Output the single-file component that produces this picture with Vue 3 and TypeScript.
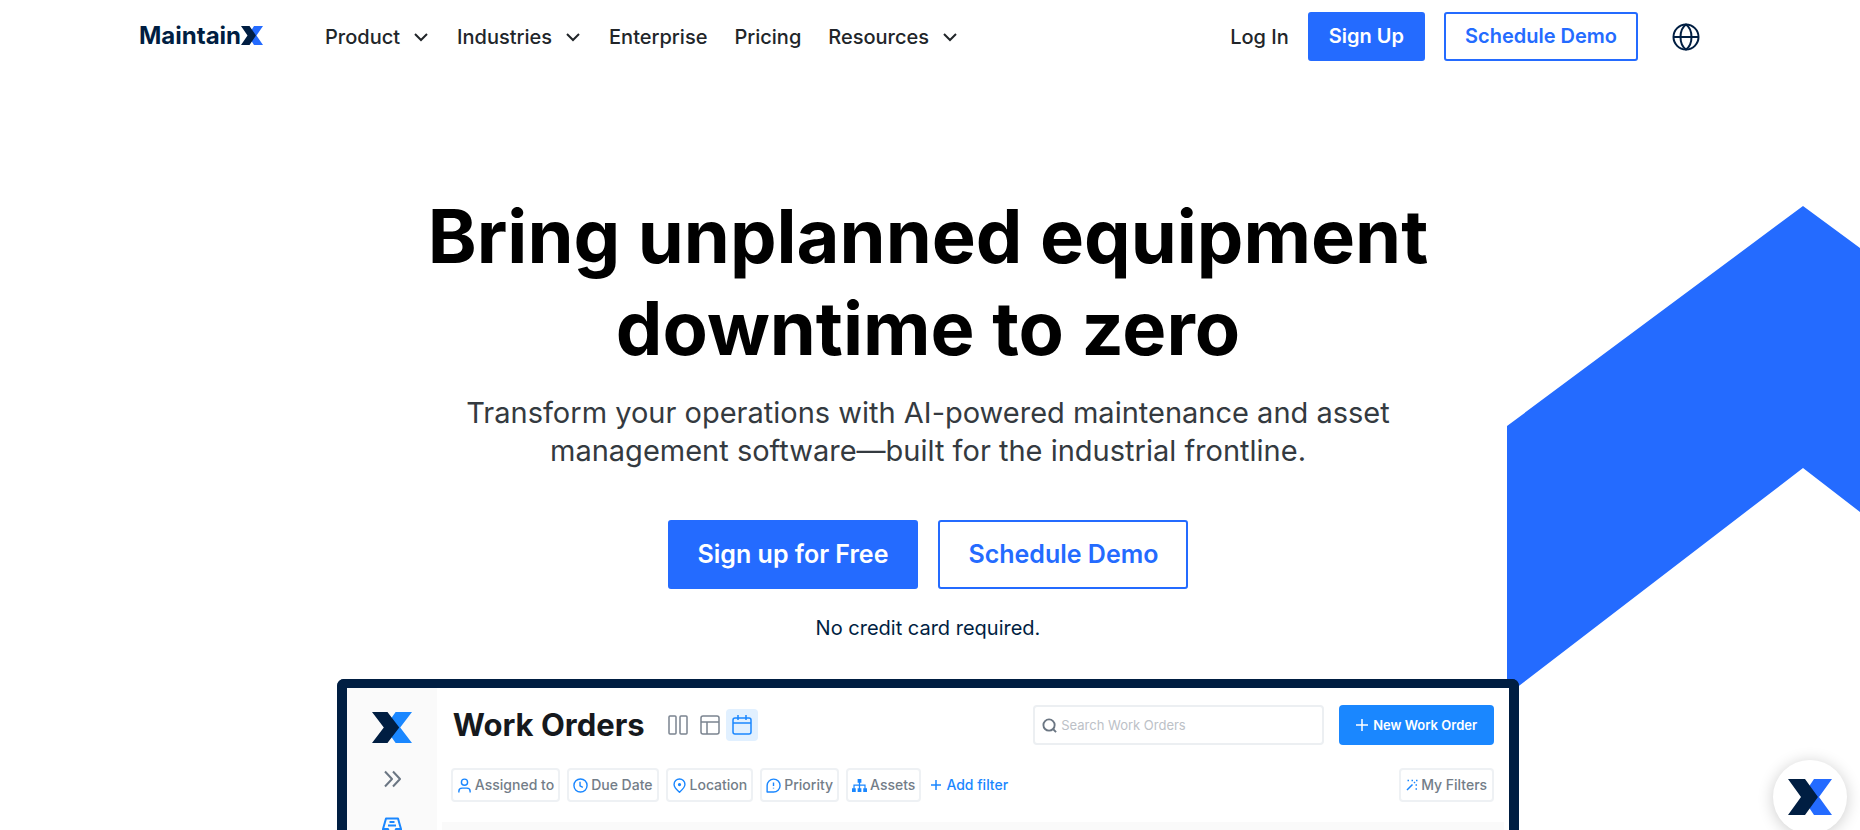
<script setup lang="ts">
import { ref } from 'vue'

interface NavItem {
  label: string
  menu: boolean
}

interface Filter {
  label: string
  icon: 'user' | 'clock' | 'pin' | 'alert' | 'tree'
}

const navItems: NavItem[] = [
  { label: 'Product', menu: true },
  { label: 'Industries', menu: true },
  { label: 'Enterprise', menu: false },
  { label: 'Pricing', menu: false },
  { label: 'Resources', menu: true },
]

const filters: Filter[] = [
  { label: 'Assigned to', icon: 'user' },
  { label: 'Due Date', icon: 'clock' },
  { label: 'Location', icon: 'pin' },
  { label: 'Priority', icon: 'alert' },
  { label: 'Assets', icon: 'tree' },
]

const query = ref('')
const view = ref<'columns' | 'table' | 'calendar'>('calendar')
</script>

<template>
  <div class="page">
    <svg class="backdrop" viewBox="0 0 353 489" aria-hidden="true">
      <path d="M0 220 296 0 353 42V306L296 262 0 489Z" fill="#246bff" />
    </svg>

    <header class="header">
      <a class="brand" href="#" aria-label="MaintainX home">
        <span>Maintain</span>
        <svg class="brand-mark" viewBox="0 0 44 36" preserveAspectRatio="none" aria-hidden="true">
          <path d="M26 0H44L31 18 44 36H26L20 27 29 18 20 9Z" fill="#246bff" />
          <path d="M0 0H17L30 18 17 36H0L13 18Z" fill="#001e42" />
        </svg>
      </a>
      <nav class="nav" aria-label="Main">
        <template v-for="item in navItems" :key="item.label">
          <button v-if="item.menu" class="nav-item" type="button" aria-haspopup="true">
            {{ item.label }}
            <svg class="caret" viewBox="0 0 14 10" aria-hidden="true"><path d="M1 2 7 8 13 2" /></svg>
          </button>
          <a v-else class="nav-item" href="#">{{ item.label }}</a>
        </template>
      </nav>
      <div class="account">
        <a class="nav-item" href="#">Log In</a>
        <a class="btn solid" href="#">Sign Up</a>
        <a class="btn outline" href="#">Schedule Demo</a>
        <button class="globe" type="button" aria-label="Change language">
          <svg viewBox="0 0 28 28" aria-hidden="true">
            <circle cx="14" cy="14" r="12.5" />
            <path d="M1.500 14H26.500M14 1.500C10.500 4 8.500 9 8.500 14S10.500 24 14 26.500C17.500 24 19.500 19 19.500 14S17.500 4 14 1.500Z" />
          </svg>
        </button>
      </div>
    </header>

    <main class="hero">
      <h1>Bring unplanned equipment<br />downtime to zero</h1>
      <p class="lead">
        Transform your operations with AI-powered maintenance and asset<br />
        management software—built for the industrial frontline.
      </p>
      <div class="actions">
        <a class="btn large solid" href="#">Sign up for Free</a>
        <a class="btn large outline" href="#">Schedule Demo</a>
      </div>
      <p class="note">No credit card required.</p>

      <section class="app" aria-label="Work Orders preview">
        <aside class="rail">
          <svg class="rail-mark" viewBox="0 0 44 36" preserveAspectRatio="none" aria-hidden="true">
            <path d="M26 0H44L31 18 44 36H26L20 27 29 18 20 9Z" fill="#1a87ff" />
            <path d="M0 0H17L30 18 17 36H0L13 18Z" fill="#001e42" />
          </svg>
          <button class="rail-btn" type="button" aria-label="Expand sidebar">
            <svg class="line gray" viewBox="0 0 20 20" aria-hidden="true"><path d="M3 2.500 10 10 3 17.500M11 2.500 18 10 11 17.500" /></svg>
          </button>
          <button class="rail-btn orders" type="button" aria-label="Work orders">
            <svg class="line blue" viewBox="0 0 20 20" aria-hidden="true">
              <path d="M4 1.500H16L19 12V19H1V12ZM7.500 5H12.500M6 8.500H14M1 12H6L7 15H13L14 12H19" />
            </svg>
          </button>
        </aside>
        <div class="workspace">
          <div class="bar">
            <h2>Work Orders</h2>
            <div class="views" role="group" aria-label="View">
              <button type="button" aria-label="Columns" :class="{ active: view === 'columns' }" @click="view = 'columns'">
                <svg class="line" viewBox="0 0 20 20" aria-hidden="true"><rect x="1" y="1" width="7" height="18" rx="1" /><rect x="12" y="1" width="7" height="18" rx="1" /></svg>
              </button>
              <button type="button" aria-label="Table" :class="{ active: view === 'table' }" @click="view = 'table'">
                <svg class="line" viewBox="0 0 20 20" aria-hidden="true"><rect x="1" y="1" width="18" height="18" rx="2" /><path d="M1 7H19M7 7V19" /></svg>
              </button>
              <button type="button" aria-label="Calendar" :class="{ active: view === 'calendar' }" @click="view = 'calendar'">
                <svg class="line" viewBox="0 0 20 20" aria-hidden="true"><rect x="1" y="3" width="18" height="16" rx="2" /><path d="M1 8H19M6 0V5M14 0V5" /></svg>
              </button>
            </div>
            <label class="search">
              <svg class="line gray" viewBox="0 0 16 16" aria-hidden="true"><circle cx="7.500" cy="7.500" r="6" /><path d="M12 12 15 15" /></svg>
              <input v-model="query" type="search" placeholder="Search Work Orders" aria-label="Search Work Orders" />
            </label>
            <button class="new-order" type="button">
              <svg class="line" viewBox="0 0 12 12" aria-hidden="true"><path d="M6 0V12M0 6H12" /></svg>
              New Work Order
            </button>
          </div>
          <div class="filters">
            <button v-for="filter in filters" :key="filter.label" class="chip" type="button">
              <svg v-if="filter.icon === 'user'" class="line blue" viewBox="0 0 16 16" aria-hidden="true"><circle cx="8" cy="4.500" r="3.300" /><path d="M2 15.500V14C2 12 3.500 10.800 5.500 10.800H10.500C12.500 10.800 14 12 14 14V15.500" /></svg>
              <svg v-else-if="filter.icon === 'clock'" class="line blue" viewBox="0 0 16 16" aria-hidden="true"><circle cx="8" cy="8" r="7" /><path d="M7.500 4V8.500L10.500 10" /></svg>
              <svg v-else-if="filter.icon === 'pin'" class="line blue" viewBox="0 0 16 16" aria-hidden="true"><path d="M8 15.200C5 12.500 2.200 10 2.200 6.800A5.800 5.800 0 0 1 13.800 6.800C13.800 10 11 12.500 8 15.200Z" /><circle cx="8" cy="7" r="1" fill="currentColor" /></svg>
              <svg v-else-if="filter.icon === 'alert'" class="line blue" viewBox="0 0 16 16" aria-hidden="true"><path d="M1.200 15V8A6.900 6.900 0 1 1 8 15ZM8 4.800V8.500M8 10.300V11.300" /></svg>
              <svg v-else class="blue" viewBox="0 0 16 16" aria-hidden="true"><path d="M6 1H10V5H8.700V7H14.500V11H16V15H12V11H13.200V8.300H8.700V11H10V15H6V11H7.300V8.300H2.800V11H4V15H0V11H1.500V7H7.300V5H6Z" fill="currentColor" /></svg>
              {{ filter.label }}
            </button>
            <button class="add" type="button">
              <svg class="line" viewBox="0 0 12 12" aria-hidden="true"><path d="M6 1V11M1 6H11" /></svg>
              Add filter
            </button>
            <button class="chip mine" type="button">
              <svg class="line blue" viewBox="0 0 12 12" aria-hidden="true"><path d="M1 11 6.500 5.500M8 4 9 3" /><path d="M1.500 1.500H3M5.500 1.500H7M10 1.500H11.500M9.500 6H11M9.500 10H11" /></svg>
              My Filters
            </button>
          </div>
          <div class="canvas"></div>
        </div>
      </section>
    </main>

    <button class="chat" type="button" aria-label="Open chat">
      <svg viewBox="0 0 44 36" aria-hidden="true">
        <path d="M26 0H44L31 18 44 36H26L20 27 29 18 20 9Z" fill="#246bff" />
        <path d="M0 0H17L30 18 17 36H0L13 18Z" fill="#001e42" />
      </svg>
    </button>
  </div>
</template>

<style>
body {
  margin: 0;
  background: #fff;
}
</style>

<style scoped>
.page {
  position: relative;
  display: flex;
  flex-direction: column;
  height: 100vh;
  overflow: hidden;
  font-family: Inter, "Liberation Sans", sans-serif;
  color: #212529;
}

.page *,
.page *::before {
  box-sizing: border-box;
}

a {
  color: inherit;
  text-decoration: none;
}

button {
  margin: 0;
  padding: 0;
  border: 0;
  background: none;
  color: inherit;
  font: inherit;
  cursor: pointer;
}

svg {
  display: block;
  flex: none;
}

.line {
  fill: none;
  stroke: currentColor;
  stroke-width: 1.5;
  stroke-linejoin: round;
}

.gray {
  color: #6b7683;
}

.blue {
  color: #1a87ff;
}

.backdrop {
  position: absolute;
  top: 206px;
  right: 0;
  width: 353px;
}

.header {
  display: flex;
  align-items: center;
  padding: 12px 160px 12px 139px;
}

.brand {
  display: flex;
  align-items: center;
  margin-right: 62px;
  padding-bottom: 2px;
  color: #001e42;
  font-size: 24px;
  font-weight: 700;
  line-height: 28px;
}

.brand-mark {
  width: 22px;
  height: 19px;
}

.nav {
  display: flex;
  gap: 27px;
}

.nav-item {
  display: flex;
  align-items: center;
  gap: 14px;
  font-size: 20px;
  font-weight: 500;
  line-height: 24px;
  white-space: nowrap;
}

.caret {
  width: 14px;
  height: 10px;
  margin-right: 2px;
  fill: none;
  stroke: currentColor;
  stroke-width: 2;
}

.account {
  display: flex;
  align-items: center;
  gap: 19px;
  margin-left: auto;
}

.btn {
  display: block;
  padding: 11px 19px;
  border: 2px solid #246bff;
  border-radius: 3px;
  font-size: 20px;
  font-weight: 600;
  line-height: 23px;
  white-space: nowrap;
}

.solid {
  background: #246bff;
  color: #fff;
}

.outline {
  background: #fff;
  color: #246bff;
}

.globe {
  margin-left: 15px;
}

.globe svg {
  width: 28px;
  height: 28px;
  fill: none;
  stroke: #001e42;
  stroke-width: 2;
}

.hero {
  position: relative;
  display: flex;
  flex: 1;
  flex-direction: column;
  align-items: center;
  min-height: 0;
  padding: 117px 4px 0 0;
  text-align: center;
}

h1 {
  margin: 0;
  color: #000;
  font-size: 74px;
  font-weight: 700;
  line-height: 92px;
}

.lead {
  margin: 20px 0 50px;
  color: #343a40;
  font-size: 29px;
  line-height: 38px;
}

.actions {
  display: flex;
  gap: 20px;
}

.large {
  padding: 18px 28px;
  font-size: 25px;
  line-height: 29px;
}

.note {
  margin: 27px 0 39px;
  color: #001e42;
  font-size: 20px;
  line-height: 24px;
}

.app {
  display: flex;
  flex: 1;
  width: 63.7%;
  min-height: 0;
  overflow: hidden;
  border: 10px solid #001e42;
  border-top-width: 9px;
  border-bottom: 0;
  border-radius: 7px 7px 0 0;
  background: #fff;
  text-align: left;
}

.rail {
  display: flex;
  flex: none;
  flex-direction: column;
  align-items: center;
  width: 90px;
  padding-top: 24px;
  background: #fafafa;
}

.rail-mark {
  width: 40px;
  height: 31px;
}

.rail-btn {
  margin-top: 26px;
}

.rail-btn svg {
  width: 20px;
  height: 20px;
  stroke-width: 2;
}

.rail-btn.orders {
  margin-top: 28px;
}

.workspace {
  display: flex;
  flex: 1;
  flex-direction: column;
  min-width: 0;
}

.bar {
  display: flex;
  align-items: center;
  padding: 17px 15px 0 16px;
}

h2 {
  margin: 0;
  color: #16191d;
  font-size: 31px;
  font-weight: 700;
  line-height: 40px;
}

.views {
  display: flex;
  margin-left: 17px;
  color: #7b8490;
}

.views button {
  padding: 6px;
  border-radius: 4px;
}

.views svg {
  width: 20px;
  height: 20px;
}

.views .active {
  background: #e1f0ff;
  color: #1a87ff;
}

.search {
  display: flex;
  align-items: center;
  gap: 4px;
  width: 291px;
  height: 40px;
  margin-left: auto;
  padding: 0 7px;
  border: 2px solid #eceff2;
  border-radius: 4px;
}

.search svg {
  width: 15px;
  height: 15px;
  stroke-width: 2;
}

.search input {
  flex: 1;
  min-width: 0;
  padding: 0;
  border: 0;
  outline: 0;
  background: none;
  color: #16191d;
  font: 400 13px/20px Inter, "Liberation Sans", sans-serif;
}

.search input::placeholder {
  color: #bcc1c7;
  opacity: 1;
}

.new-order {
  display: flex;
  align-items: center;
  gap: 5px;
  height: 40px;
  margin-left: 15px;
  padding: 0 17px;
  border-radius: 4px;
  background: #1a87ff;
  color: #fff;
  font-size: 13px;
  font-weight: 600;
  white-space: nowrap;
}

.new-order svg,
.add svg {
  width: 12px;
  height: 12px;
}

.filters {
  display: flex;
  align-items: center;
  gap: 7px;
  padding: 23px 15px 20px 14px;
  color: #737d88;
  font-size: 14px;
  font-weight: 500;
  line-height: 20px;
  white-space: nowrap;
}

.chip {
  display: flex;
  align-items: center;
  gap: 3px;
  height: 34px;
  padding: 0 4px;
  border: 2px solid #eef1f4;
  border-radius: 4px;
}

.chip svg {
  width: 15px;
  height: 15px;
}

.add {
  display: flex;
  align-items: center;
  gap: 4px;
  margin-left: 2px;
  color: #1a87ff;
}

.chip.mine {
  margin-left: auto;
  padding: 0 5px;
}

.mine svg {
  width: 12px;
  height: 12px;
}

.canvas {
  flex: 1;
  margin: 0 5px;
  background: #fafafa;
}

.chat {
  position: fixed;
  right: 13px;
  bottom: -4px;
  display: flex;
  align-items: center;
  justify-content: center;
  width: 74px;
  height: 74px;
  border-radius: 50%;
  background: #fff;
  box-shadow: 0 2px 16px rgba(0, 0, 0, 0.2);
}

.chat svg {
  width: 44px;
  height: 36px;
}
</style>
